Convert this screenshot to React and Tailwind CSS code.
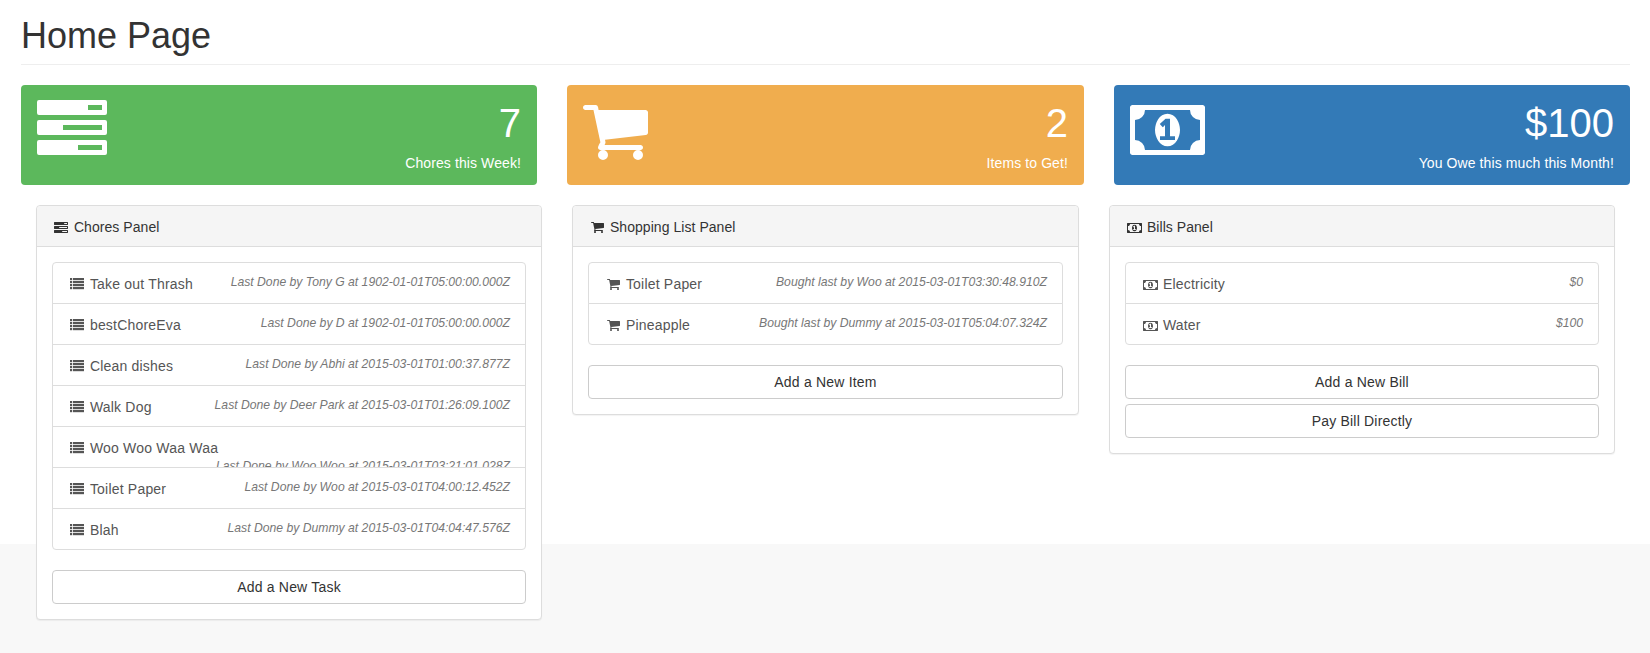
const CART =
  "M704 1536q0 52-38 90t-90 38-90-38-38-90 38-90 90-38 90 38 38 90zm896 0q0 52-38 90t-90 38-90-38-38-90 38-90 90-38 90 38 38 90zm128-1088v512q0 24-16.5 42.5t-40.5 21.5l-1044 122q13 60 13 70 0 16-24 64h920q26 0 45 19t19 45-19 45-45 19h-1024q-26 0-45-19t-19-45q0-11 8-31.5t16-36 21.5-40 15.5-29.5l-177-823h-204q-26 0-45-19t-19-45 19-45 45-19h256q16 0 28.5 6.5t19.5 15.5 13 24.5 8 26 5.5 29.5 4.5 26h1201q26 0 45 19t19 45z";
const MONEY =
  "M704 1152h384v-96h-128v-448h-114l-148 137 77 80q42-37 55-57h2v288h-128v96zm512-256q0 70-21 142t-59.5 134-101.5 101-138 39-138-39-101.5-101-59.5-134-21-142 21-142 59.5-134 101.5-101 138-39 138 39 101.5 101 59.5 134 21 142zm512 256v-512q-106 0-181-75t-75-181h-1152q0 106-75 181t-181 75v512q106 0 181 75t75 181h1152q0-106 75-181t181-75zm128-832v1152q0 26-19 45t-45 19h-1792q-26 0-45-19t-19-45v-1152q0-26 19-45t45-19h1792q26 0 45 19t19 45z";

function TasksIcon({ className }) {
  const bars = [
    [0, 51],
    [20, 26],
    [40, 41],
  ];
  const d = bars
    .map(
      ([y, x]) =>
        `M2 ${y}h66a2 2 0 0 1 2 2v11a2 2 0 0 1-2 2h-66a2 2 0 0 1-2-2v-11a2 2 0 0 1 2-2z` +
        `M${x} ${y + 5}v5h${65 - x}v-5z`
    )
    .join("");
  return (
    <svg viewBox="0 0 70 55" className={className} fill="currentColor">
      <path fillRule="evenodd" d={d} />
    </svg>
  );
}

function CartIcon({ className }) {
  return (
    <svg viewBox="64 256 1664 1408" className={className} fill="currentColor">
      <path d={CART} />
    </svg>
  );
}

function MoneyIcon({ className }) {
  return (
    <svg viewBox="-64 256 1920 1280" className={className} fill="currentColor">
      <path d={MONEY} />
    </svg>
  );
}

function ListIcon({ className }) {
  return (
    <svg viewBox="0 0 14 12" className={className} fill="currentColor">
      {[0, 3, 6, 9].map((y) => (
        <g key={y}>
          <rect x="0" y={y} width="2.2" height="2.2" />
          <rect x="3" y={y} width="11" height="2.2" />
        </g>
      ))}
    </svg>
  );
}

function StatCard({ color, value, label, icon }) {
  return (
    <div className={`flex h-[100px] justify-between rounded px-4 py-[15px] text-white ${color}`}>
      <div>{icon}</div>
      <div className="text-right">
        <div className="text-[40px] leading-[46px]">{value}</div>
        <div className="mt-[7px] text-sm leading-5 tracking-[0.1px]">{label}</div>
      </div>
    </div>
  );
}

function Fw({ children }) {
  return <span className="inline-flex w-[18px] justify-center align-[-1px]">{children}</span>;
}

function Panel({ icon, title, rows, itemIcon, buttons }) {
  return (
    <div className="self-start rounded border border-[#ddd] bg-white shadow-[0_1px_1px_rgba(0,0,0,0.05)]">
      <div className="rounded-t border-b border-[#ddd] bg-[#f5f5f5] px-[15px] pt-[11px] pb-[9px] tracking-[0.05px] text-[#333]">
        <Fw>{icon}</Fw> {title}
      </div>
      <div className="p-[15px]">
        <div className="mb-5">
          {rows.map((row, idx) => (
            <div
              key={idx}
              className="relative -mb-px block border border-[#ddd] bg-white px-[15px] pt-[11px] pb-[9px] text-[#555] first:rounded-t last:mb-0 last:rounded-b"
            >
              <Fw>{itemIcon}</Fw> <span className="tracking-[0.2px]">{row[0]}</span>
              <em className="float-right text-[12.2px] text-[#777]">{row[1]}</em>
            </div>
          ))}
        </div>
        <div className="flex flex-col gap-[5px]">
          {buttons.map((b) => (
            <button
              key={b}
              className="h-[34px] w-full rounded border border-[#ccc] bg-white text-sm tracking-[0.2px] text-[#333]"
            >
              {b}
            </button>
          ))}
        </div>
      </div>
    </div>
  );
}

const chores = [
  ["Take out Thrash", "Last Done by Tony G at 1902-01-01T05:00:00.000Z"],
  ["bestChoreEva", "Last Done by D at 1902-01-01T05:00:00.000Z"],
  ["Clean dishes", "Last Done by Abhi at 2015-03-01T01:00:37.877Z"],
  ["Walk Dog", "Last Done by Deer Park at 2015-03-01T01:26:09.100Z"],
  ["Woo Woo Waa Waa", "Last Done by Woo Woo at 2015-03-01T03:21:01.028Z"],
  ["Toilet Paper", "Last Done by Woo at 2015-03-01T04:00:12.452Z"],
  ["Blah", "Last Done by Dummy at 2015-03-01T04:04:47.576Z"],
];

const shopping = [
  ["Toilet Paper", "Bought last by Woo at 2015-03-01T03:30:48.910Z"],
  ["Pineapple", "Bought last by Dummy at 2015-03-01T05:04:07.324Z"],
];

const bills = [
  ["Electricity", "$0"],
  ["Water", "$100"],
];

export default function App() {
  return (
    <div className="min-h-screen bg-[#f8f8f8] font-['Liberation_Sans',Arial,sans-serif] text-sm leading-[1.4286] text-[#333]">
      <div className="h-[544px] bg-white pl-[21px] pr-5 pt-4">
        <h1 className="mb-5 border-b border-[#eee] pb-2 text-[36px] leading-[39.6px] font-normal">
          Home Page
        </h1>

        <div className="mb-5 grid grid-cols-[516px_517px_516px] gap-[30px]">
          <StatCard
            color="bg-[#5cb85c]"
            value="7"
            label="Chores this Week!"
            icon={<TasksIcon className="h-[55px] w-[70px]" />}
          />
          <StatCard
            color="bg-[#f0ad4e]"
            value="2"
            label="Items to Get!"
            icon={<CartIcon className="mt-[5px] h-[55px] w-[65px]" />}
          />
          <StatCard
            color="bg-[#337ab7]"
            value="$100"
            label="You Owe this much this Month!"
            icon={<MoneyIcon className="mt-[5px] h-[50px] w-[75px]" />}
          />
        </div>

        <div className="grid grid-cols-[506px_507px_506px] gap-[30px] px-[15px]">
          <Panel
            icon={<TasksIcon className="h-[11px] w-[14px]" />}
            title="Chores Panel"
            rows={chores}
            itemIcon={<ListIcon className="h-3 w-[14px]" />}
            buttons={["Add a New Task"]}
          />
          <Panel
            icon={<CartIcon className="h-[11px] w-[13px]" />}
            title="Shopping List Panel"
            rows={shopping}
            itemIcon={<CartIcon className="h-[11px] w-[13px]" />}
            buttons={["Add a New Item"]}
          />
          <Panel
            icon={<MoneyIcon className="h-[10px] w-[15px]" />}
            title="Bills Panel"
            rows={bills}
            itemIcon={<MoneyIcon className="h-[10px] w-[15px]" />}
            buttons={["Add a New Bill", "Pay Bill Directly"]}
          />
        </div>
      </div>
    </div>
  );
}
